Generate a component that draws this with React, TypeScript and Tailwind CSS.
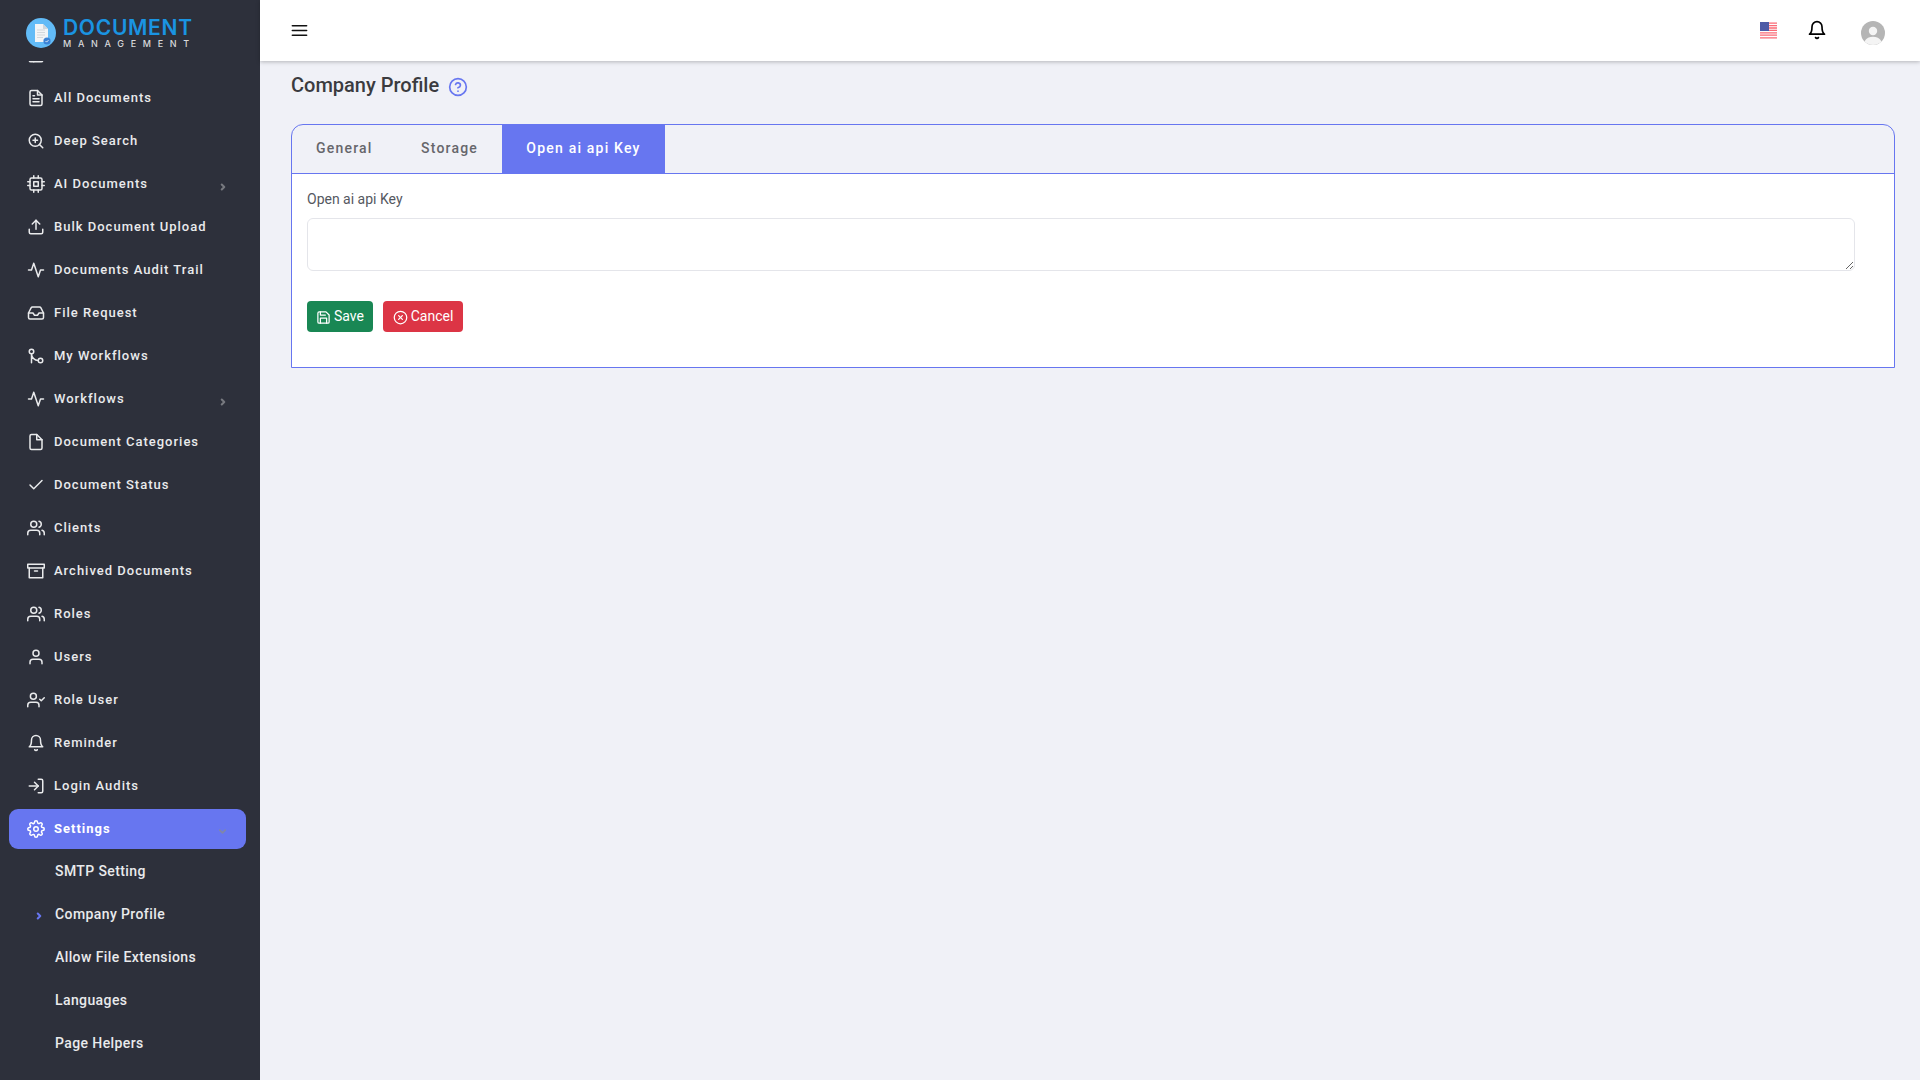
import type { IconType } from "react-icons";
import {
  FiActivity,
  FiArchive,
  FiBell,
  FiCheck,
  FiChevronDown,
  FiChevronRight,
  FiCpu,
  FiFile,
  FiFileText,
  FiGitMerge,
  FiHelpCircle,
  FiInbox,
  FiLayout,
  FiLogIn,
  FiMenu,
  FiSave,
  FiSettings,
  FiUpload,
  FiUser,
  FiUserCheck,
  FiUsers,
  FiXCircle,
  FiZoomIn,
} from "react-icons/fi";

type NavItem = {
  label: string;
  icon: IconType;
  hasChildren?: boolean;
};

const navItems: Array<NavItem> = [
  { label: "Dashboard", icon: FiLayout },
  { label: "All Documents", icon: FiFileText },
  { label: "Deep Search", icon: FiZoomIn },
  { label: "AI Documents", icon: FiCpu, hasChildren: true },
  { label: "Bulk Document Upload", icon: FiUpload },
  { label: "Documents Audit Trail", icon: FiActivity },
  { label: "File Request", icon: FiInbox },
  { label: "My Workflows", icon: FiGitMerge },
  { label: "Workflows", icon: FiActivity, hasChildren: true },
  { label: "Document Categories", icon: FiFile },
  { label: "Document Status", icon: FiCheck },
  { label: "Clients", icon: FiUsers },
  { label: "Archived Documents", icon: FiArchive },
  { label: "Roles", icon: FiUsers },
  { label: "Users", icon: FiUser },
  { label: "Role User", icon: FiUserCheck },
  { label: "Reminder", icon: FiBell },
  { label: "Login Audits", icon: FiLogIn },
];

const settingsItems = ["SMTP Setting", "Company Profile", "Allow File Extensions", "Languages", "Page Helpers"];

function Logo() {
  return (
    <div className="flex h-[61px] shrink-0 items-start pl-[26px] pt-[18px]">
      <svg width="30" height="30" viewBox="0 0 30 30" className="shrink-0">
        <circle cx="15" cy="15" r="15" fill="#62bbf7" />
        <path d="M9 6h8l5 5v13H9z" fill="#f2f4f6" />
        <path d="M17 6l5 5h-5z" fill="#cfd6dc" />
        <path d="M11 12h8M11 14.5h8M11 17h8M11 19.5h6" stroke="#d3d8dc" strokeWidth="1" />
        <circle cx="21" cy="23" r="3.6" fill="#3c83d6" />
        <path d="M19.5 23l1.1 1.1 1.9-2" stroke="#fff" strokeWidth="0.8" fill="none" />
      </svg>
      <div className="ml-[7px] flex flex-col">
        <span className="mt-[1px] text-[21px] leading-[18px] font-semibold tracking-[0.7px] text-[#1a94e2] font-['Inter',sans-serif]">
          DOCUMENT
        </span>
        <span className="mt-[2px] text-[9px] leading-[10px] font-medium tracking-[6.7px] text-[#d8d9dc] font-['Inter',sans-serif]">
          MANAGEMENT
        </span>
      </div>
    </div>
  );
}

function SidebarLink({ label, icon: Icon, hasChildren }: NavItem) {
  return (
    <div className="flex h-[43px] items-center pl-[27px] text-[13px] font-medium tracking-[1px] text-[#e9eaec]">
      <Icon size={18} className="shrink-0" />
      <span className="ml-[9px] grow">{label}</span>
      {hasChildren && <FiChevronRight size={10} strokeWidth={5} className="mr-[32px] mt-[7px] text-[#77797f]" />}
    </div>
  );
}

function Sidebar() {
  return (
    <aside className="flex h-screen w-[260px] shrink-0 flex-col overflow-hidden bg-[#2d303b]">
      <Logo />
      <div className="min-h-0 grow overflow-hidden">
        <nav className="-mt-[28px]">
          {navItems.map((item) => (
            <SidebarLink key={item.label} {...item} />
          ))}

          <div className="my-[1.5px] ml-[9px] mr-[14px] flex h-[40px] items-center rounded-[9px] bg-[#6776f0] pl-[18px] text-[13px] font-bold tracking-[1px] text-white">
            <FiSettings size={18} className="shrink-0" />
            <span className="ml-[9px] grow">Settings</span>
            <FiChevronDown size={11} strokeWidth={3.5} className="mr-[18px] mt-[6px] text-[#8087a8]" />
          </div>

          {settingsItems.map((item) => (
            <div
              key={item}
              className="relative flex h-[43px] items-center pl-[55px] text-[14px] font-medium tracking-[0.4px] text-[#e9eaec]"
            >
              {item === "Company Profile" && (
                <FiChevronRight size={10} strokeWidth={5} className="absolute left-[34px] top-[18px] text-[#6776f0]" />
              )}
              {item}
            </div>
          ))}
        </nav>
      </div>
    </aside>
  );
}

function Flag() {
  return (
    <svg width="17" height="17" viewBox="0 0 17 17" className="shrink-0">
      <rect width="17" height="17" fill="#fdfdfd" />
      <path d="M0 1.2h17M0 3.6h17M0 6h17M0 8.4h17M0 10.8h17M0 13.2h17M0 15.8h17" stroke="#fb6a76" strokeWidth="1.3" />
      <rect width="9" height="9" fill="#4d5aa6" />
    </svg>
  );
}

function Avatar() {
  return (
    <svg width="24" height="24" viewBox="0 0 24 24" className="mt-[4px] shrink-0">
      <circle cx="12" cy="12" r="12" fill="#b5b5b5" />
      <circle cx="12" cy="10" r="4.2" fill="#f4f4f4" />
      <path d="M3.5 20.5c1.8-3.4 5-4.7 8.5-4.7s6.7 1.3 8.5 4.7A12 12 0 0 1 12 24a12 12 0 0 1-8.5-3.5z" fill="#f4f4f4" />
    </svg>
  );
}

function Header() {
  return (
    <header className="relative flex h-[61px] shrink-0 items-center bg-white pl-[30px] pr-[35px] shadow-[0_1px_4px_rgba(0,0,0,0.25)]">
      <FiMenu size={19} className="-mt-[1px] text-[#111]" />
      <div className="ml-auto flex items-center">
        <Flag />
        <FiBell size={20} className="ml-[30px] -mt-[1px] text-black" />
        <div className="ml-[34px]">
          <Avatar />
        </div>
      </div>
    </header>
  );
}

function CompanyProfile() {
  return (
    <div className="pl-[31px] pr-[25px]">
      <div className="flex h-[46px] items-center pt-[2px]">
        <h1 className="text-[20px] font-medium text-[#3b3b3f]">Company Profile</h1>
        <FiHelpCircle size={20} className="ml-[9px] mt-[3px] text-[#6776f0]" />
      </div>

      <div className="mt-[17px] overflow-hidden rounded-t-[12px] border border-[#6776f0]">
        <div className="flex h-[49px] border-b border-[#6776f0] text-[14px] font-medium tracking-[1.2px]">
          <div className="flex w-[105px] items-center pb-[1px] pl-[24px] text-[#66666b]">General</div>
          <div className="flex w-[105px] items-center pb-[1px] pl-[24px] text-[#66666b]">Storage</div>
          <div className="flex w-[163px] items-center justify-center bg-[#6776f0] pb-[1px] text-white">Open ai api Key</div>
        </div>

        <div className="h-[193px] bg-white px-[15px] pt-[16px]">
          <label className="block text-[14px] leading-[18px] text-[#55585f]">Open ai api Key</label>
          <textarea className="mt-[10px] block h-[53px] w-[1548px] rounded-[6px] border-[1.5px] border-[#e4e5ea] bg-white" />

          <div className="mt-[30px] flex gap-[10px]">
            <button className="flex h-[31px] w-[66px] items-center justify-center gap-[3px] rounded-[4px] bg-[#198754] text-[14px] text-white">
              <FiSave size={15} className="mt-[1px]" />
              Save
            </button>
            <button className="flex h-[31px] w-[80px] items-center justify-center gap-[3px] rounded-[4px] bg-[#dc3545] text-[14px] text-white">
              <FiXCircle size={15} className="mt-[1px]" />
              Cancel
            </button>
          </div>
        </div>
      </div>
    </div>
  );
}

export default function App() {
  return (
    <div className="flex h-screen overflow-hidden bg-[#f0f1f7] font-['Roboto',sans-serif]">
      <Sidebar />
      <main className="flex min-w-0 grow flex-col">
        <Header />
        <CompanyProfile />
      </main>
    </div>
  );
}
